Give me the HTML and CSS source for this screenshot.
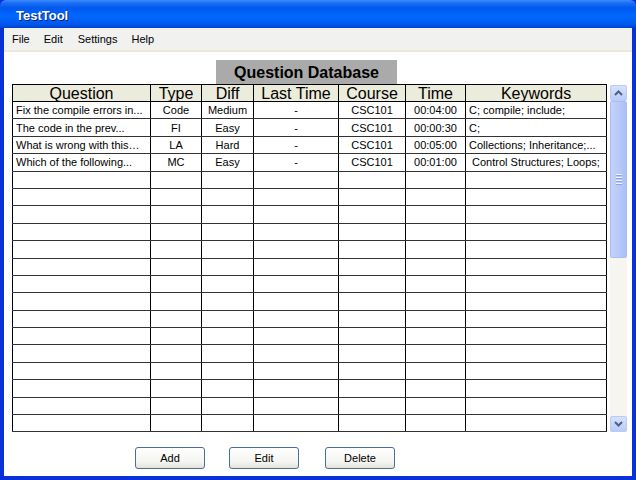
FILE: index.html
```html
<!DOCTYPE html>
<html>
<head>
<meta charset="utf-8">
<link rel="stylesheet" href="styles.css">
</head>
<body>
<div class="window">
  <div class="titlebar"><span class="title">TestTool</span></div>
  <div class="menubar">
    <span class="menu">File</span>
    <span class="menu">Edit</span>
    <span class="menu">Settings</span>
    <span class="menu">Help</span>
  </div>
  <div class="content">
    <div class="label-row"><div class="dblabel">Question Database</div></div>
    <div class="table-row">
      <table class="grid">
        <colgroup>
          <col class="c1"><col class="c2"><col class="c3"><col class="c4"><col class="c5"><col class="c6"><col class="c7">
        </colgroup>
        <thead>
          <tr><th>Question</th><th>Type</th><th>Diff</th><th>Last Time</th><th>Course</th><th>Time</th><th>Keywords</th></tr>
        </thead>
        <tbody>
          <tr><td class="l">Fix the compile errors in...</td><td>Code</td><td>Medium</td><td>-</td><td>CSC101</td><td>00:04:00</td><td class="l">C; compile; include;</td></tr>
          <tr><td class="l">The code in the prev...</td><td>FI</td><td>Easy</td><td>-</td><td>CSC101</td><td>00:00:30</td><td class="l">C;</td></tr>
          <tr><td class="l">What is wrong with this…</td><td>LA</td><td>Hard</td><td>-</td><td>CSC101</td><td>00:05:00</td><td class="l">Collections; Inheritance;...</td></tr>
          <tr><td class="l">Which of the following...</td><td>MC</td><td>Easy</td><td>-</td><td>CSC101</td><td>00:01:00</td><td class="l">&nbsp;Control Structures; Loops;</td></tr>
          <tr><td></td><td></td><td></td><td></td><td></td><td></td><td></td></tr>
          <tr><td></td><td></td><td></td><td></td><td></td><td></td><td></td></tr>
          <tr><td></td><td></td><td></td><td></td><td></td><td></td><td></td></tr>
          <tr><td></td><td></td><td></td><td></td><td></td><td></td><td></td></tr>
          <tr><td></td><td></td><td></td><td></td><td></td><td></td><td></td></tr>
          <tr><td></td><td></td><td></td><td></td><td></td><td></td><td></td></tr>
          <tr><td></td><td></td><td></td><td></td><td></td><td></td><td></td></tr>
          <tr><td></td><td></td><td></td><td></td><td></td><td></td><td></td></tr>
          <tr><td></td><td></td><td></td><td></td><td></td><td></td><td></td></tr>
          <tr><td></td><td></td><td></td><td></td><td></td><td></td><td></td></tr>
          <tr><td></td><td></td><td></td><td></td><td></td><td></td><td></td></tr>
          <tr><td></td><td></td><td></td><td></td><td></td><td></td><td></td></tr>
          <tr><td></td><td></td><td></td><td></td><td></td><td></td><td></td></tr>
          <tr><td></td><td></td><td></td><td></td><td></td><td></td><td></td></tr>
          <tr><td></td><td></td><td></td><td></td><td></td><td></td><td></td></tr>
        </tbody>
      </table>
      <div class="scrollbar">
        <div class="sbtn">
          <svg width="9" height="6" viewBox="0 0 9 6"><path d="M1 5 L4.5 1.5 L8 5" fill="none" stroke="#4d6185" stroke-width="2"/></svg>
        </div>
        <div class="thumb">
          <div class="grip"></div><div class="grip"></div><div class="grip"></div><div class="grip"></div>
        </div>
        <div class="track"></div>
        <div class="sbtn">
          <svg width="9" height="6" viewBox="0 0 9 6"><path d="M1 1 L4.5 4.5 L8 1" fill="none" stroke="#4d6185" stroke-width="2"/></svg>
        </div>
      </div>
    </div>
    <div class="buttons">
      <button class="btn">Add</button>
      <button class="btn">Edit</button>
      <button class="btn">Delete</button>
    </div>
  </div>
</div>
</body>
</html>
```
FILE: styles.css
```css
html, body {
  margin: 0;
  padding: 0;
  background: #fff;
}
.window {
  width: 636px;
  height: 480px;
  box-sizing: border-box;
  display: flex;
  flex-direction: column;
  background: #0831d9;
  padding: 0 4px 4px 4px;
  font-family: "Liberation Sans", Arial, sans-serif;
}
.titlebar {
  height: 28px;
  margin: 0 -4px;
  background: linear-gradient(#3a8cff 0px, #1d6ef5 3px, #0058ee 8px, #0068ff 16px, #0058ee 24px, #0040d0 28px);
  border-radius: 6px 6px 0 0;
  display: flex;
  align-items: center;
  padding-left: 16px;
  padding-top: 3px;
  box-sizing: border-box;
}
.title {
  color: #fff;
  font-weight: bold;
  font-size: 13px;
  text-shadow: 1px 1px 0 #0a1f7a;
}
.menubar {
  background: #f1f1ef;
  border-bottom: 2px solid #ece9d8;
  display: flex;
  align-items: center;
  font-size: 11px;
  color: #000;
  padding-left: 8px;
  padding-bottom: 1px;
  box-sizing: border-box;
  height: 24px;
}
.menu { margin-right: 14px; }
.menu:nth-child(2) { margin-right: 15px; }
.content {
  flex: 1;
  background: #fff;
  display: flex;
  flex-direction: column;
  padding: 8px 0 0 8px;
}
.label-row {
  display: flex;
  padding-left: 204px;
}
.dblabel {
  width: 181px;
  height: 24px;
  background: #aaaaaa;
  font-weight: bold;
  font-size: 16px;
  color: #000;
  display: flex;
  align-items: center;
  justify-content: center;
  padding-top: 1px;
  box-sizing: border-box;
}
.table-row {
  display: flex;
  gap: 3px;
}
.grid {
  border-collapse: collapse;
  table-layout: fixed;
  width: 594px;
  border: 1px solid #000;
}
.c1 { width: 138px; }
.c2 { width: 51px; }
.c3 { width: 52px; }
.c4 { width: 85px; }
.c5 { width: 67px; }
.c6 { width: 60px; }
.c7 { width: 141px; }
.grid th {
  background: #ececdc;
  font-weight: normal;
  font-size: 16px;
  height: 16px;
  line-height: 15px;
  padding: 0;
  border: 1px solid #000;
  color: #000;
}
.grid td {
  height: 16.4px;
  padding: 0;
  font-size: 11px;
  line-height: 12px;
  text-align: center;
  border-left: 1px solid #000;
  border-right: 1px solid #000;
  border-bottom: 1px solid #333;
  white-space: nowrap;
  overflow: hidden;
  color: #000;
}
.grid td.l {
  text-align: left;
  padding-left: 3px;
}
.scrollbar {
  width: 17px;
  height: 347px;
  margin-top: 1px;
  background: #f6f5ef;
  display: flex;
  flex-direction: column;
}
.sbtn {
  height: 16px;
  background: linear-gradient(#d6e2fd, #b9cbf8);
  border: 1px solid #bccbf2;
  border-radius: 2px;
  box-sizing: border-box;
  display: flex;
  align-items: center;
  justify-content: center;
}
.thumb {
  height: 157px;
  background: linear-gradient(90deg, #c4d3fc, #b4c8f9 60%, #aabff6);
  border: 1px solid #a9bdf0;
  border-radius: 2px;
  box-sizing: border-box;
  display: flex;
  flex-direction: column;
  align-items: center;
  justify-content: center;
  gap: 1px;
}
.grip {
  width: 6px;
  height: 1px;
  background: #eef3ff;
  border-bottom: 1px solid #8ca4e0;
}
.track { flex: 1; }
.buttons {
  display: flex;
  padding-left: 123px;
  margin-top: 15px;
  gap: 24px;
}
.btn {
  width: 70px;
  height: 22px;
  font-family: "Liberation Sans", Arial, sans-serif;
  font-size: 11px;
  color: #000;
  background: linear-gradient(#ffffff, #f4f4f0 70%, #e3e2da);
  border: 1px solid #4a6d9a;
  border-radius: 3px;
  padding: 0;
}
.buttons .btn:last-child { margin-left: 2px; }
```
